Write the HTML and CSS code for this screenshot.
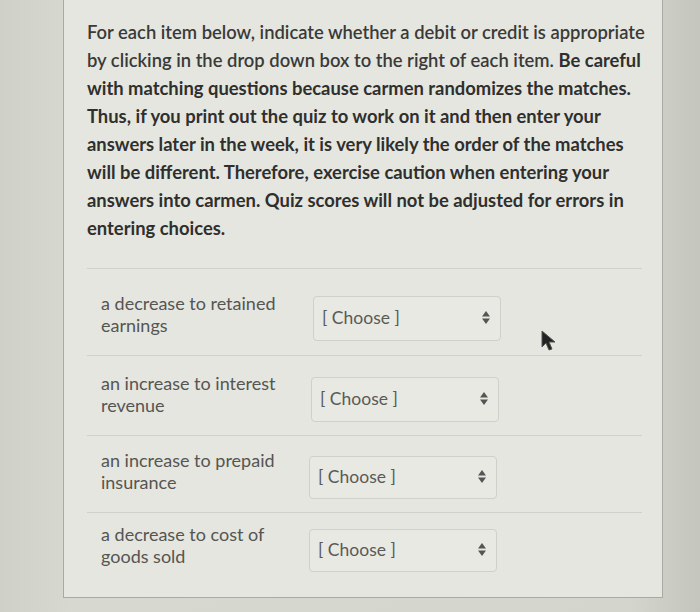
FILE: index.html
```html
<!DOCTYPE html>
<html>
<head>
<meta charset="utf-8">
<link rel="stylesheet" href="styles.css">
</head>
<body>
<div class="panel">
  <p class="intro">For each item below, indicate whether a debit or credit is appropriate<br>by clicking in the drop down box to the right of each item. <b>Be careful<br>with matching questions because carmen randomizes the matches.<br>Thus, if you print out the quiz to work on it and then enter your<br>answers later in the week, it is very likely the order of the matches<br>will be different. Therefore, exercise caution when entering your<br>answers into carmen. Quiz scores will not be adjusted for errors in<br>entering choices.</b></p>
  <div class="rows">
    <div class="row r1">
      <div class="label">a decrease to retained earnings</div>
      <div class="select"><span>[ Choose ]</span><svg class="arrows" width="8" height="13" viewBox="0 0 8 13"><path d="M4 0 L8 5.5 H0 Z M0 7.5 H8 L4 13 Z" fill="#555"/></svg></div>
    </div>
    <div class="row r2">
      <div class="label">an increase to interest revenue</div>
      <div class="select"><span>[ Choose ]</span><svg class="arrows" width="8" height="13" viewBox="0 0 8 13"><path d="M4 0 L8 5.5 H0 Z M0 7.5 H8 L4 13 Z" fill="#555"/></svg></div>
    </div>
    <div class="row r3">
      <div class="label">an increase to prepaid insurance</div>
      <div class="select"><span>[ Choose ]</span><svg class="arrows" width="8" height="13" viewBox="0 0 8 13"><path d="M4 0 L8 5.5 H0 Z M0 7.5 H8 L4 13 Z" fill="#555"/></svg></div>
    </div>
    <div class="row r4">
      <div class="label">a decrease to cost of goods sold</div>
      <div class="select"><span>[ Choose ]</span><svg class="arrows" width="8" height="13" viewBox="0 0 8 13"><path d="M4 0 L8 5.5 H0 Z M0 7.5 H8 L4 13 Z" fill="#555"/></svg></div>
    </div>
  </div>
  <svg class="cursor" width="16" height="22" viewBox="0 0 16 22"><path d="M1 1 L1 17 L5 13 L8 20 L11 19 L8 12 L14 12 Z" fill="#222" stroke="#555" stroke-width="1"/></svg>
</div>
</body>
</html>
```

FILE: styles.css
```css
html, body {
  margin: 0;
  padding: 0;
}
body {
  width: 700px;
  height: 612px;
  overflow: hidden;
  background: linear-gradient(90deg, #cfd0c8 0%, #d7d8d0 10%, #d4d5cc 90%, #c4c5bc 100%);
  font-family: Lato, "Open Sans", sans-serif;
}
.panel {
  position: relative;
  box-sizing: border-box;
  margin-left: 63px;
  margin-top: -2px;
  width: 600px;
  height: 600px;
  background: #e5e6e0;
  border: 1px solid #a9aaa2;
  border-top: none;
  padding: 20px 10px 0 23px;
}
.intro {
  margin: 0;
  font-size: 18.4px;
  line-height: 28px;
  color: #3a3a38;
  font-weight: 600;
  white-space: nowrap;
}
.intro b {
  font-weight: 700;
  color: #2f2f2d;
}
.rows {
  margin-top: 26px;
  border-top: 1px solid #d0d1cb;
  width: 555px;
}
.row {
  display: flex;
  align-items: flex-start;
  box-sizing: border-box;
  border-bottom: 1px solid #d0d1cb;
}
.r1 { height: 87px; padding-top: 23px; }
.r2 { height: 80px; padding-top: 16px; }
.r3 { height: 77px; padding-top: 13px; }
.r4 { height: 74px; padding-top: 10px; border-bottom: none; }
.r2 .select { margin-top: 5px; margin-left: 14px; }
.r3 .select { margin-top: 7px; margin-left: 12px; height: 43px; }
.r4 .select { margin-top: 6px; margin-left: 12px; height: 43px; }
.label {
  width: 196px;
  margin-left: 14px;
  font-size: 18px;
  line-height: 22px;
  color: #555552;
}
.select {
  margin-left: 16px;
  margin-top: 4px;
  box-sizing: border-box;
  width: 188px;
  height: 45px;
  border: 1px solid #cfd0ca;
  border-radius: 4px;
  background: #e8e9e3;
  display: flex;
  align-items: center;
  justify-content: space-between;
  padding: 0 10px 2px 8px;
  font-size: 17.5px;
  color: #5a5a57;
}
.arrows {
  display: block;
}
.cursor {
  position: absolute;
  left: 477px;
  top: 332px;
}
```
